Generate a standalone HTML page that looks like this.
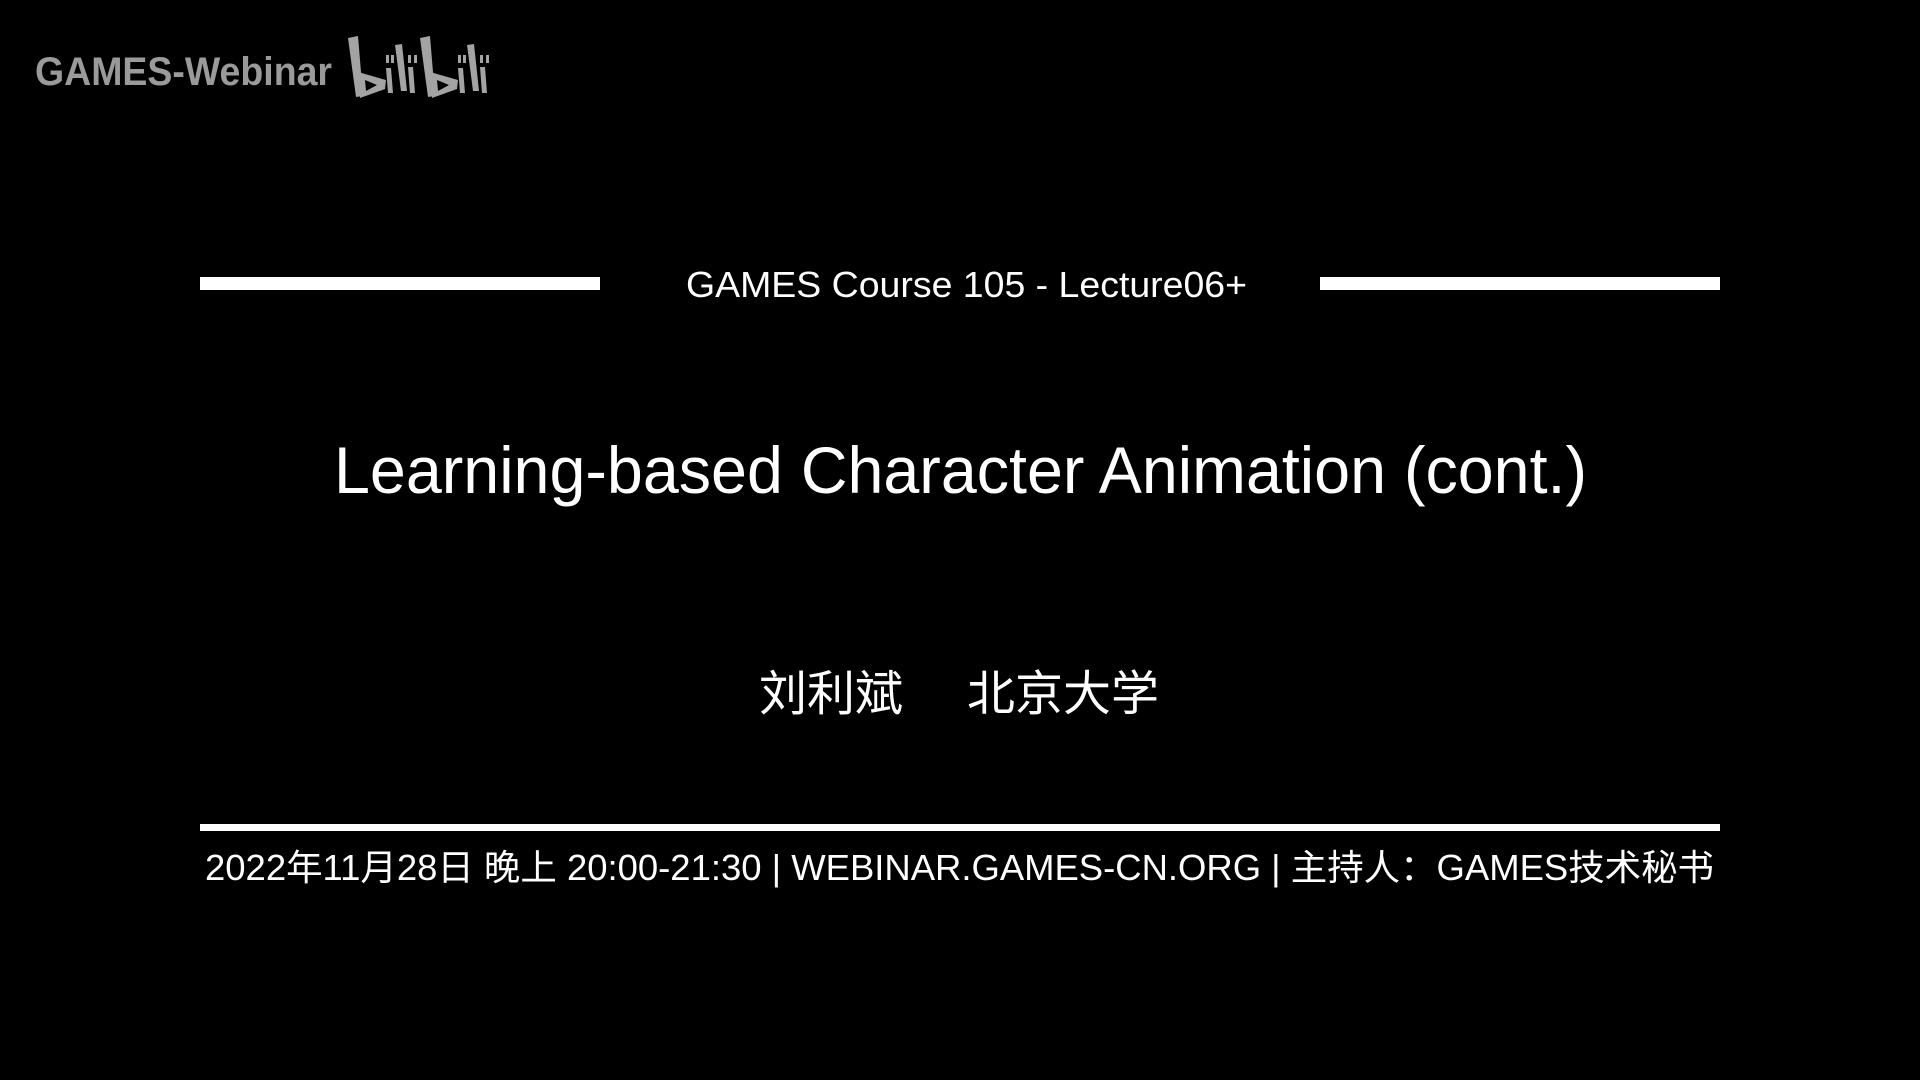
<!DOCTYPE html>
<html><head><meta charset="utf-8"><style>
html,body{margin:0;padding:0;background:#000;width:1920px;height:1080px;overflow:hidden}
svg{display:block}
</style></head><body>
<svg width="1920" height="1080" viewBox="0 0 1920 1080" xmlns="http://www.w3.org/2000/svg">
<rect width="1920" height="1080" fill="#000"/>
<text x="35" y="85" font-family="Liberation Sans, sans-serif" font-size="40" font-weight="bold" fill="#9a9a9a" textLength="297" lengthAdjust="spacingAndGlyphs">GAMES-Webinar</text>
<g fill="#a3a3a3">
 <g id="bl">
  <polygon points="348,38 358,36 363,96 356,97"/>
  <polygon points="358,72 386,80 385,89 360,98"/>
  <polygon points="365,80 377,85 366,91" fill="#000"/>
  <rect x="386" y="55" width="3" height="8"/><rect x="391" y="55" width="3" height="8"/>
  <polygon points="386,68 391,68 393,93 388,93"/>
  <polygon points="395,45 402,44 407,91 401,91"/>
  <rect x="408" y="55" width="3" height="8"/><rect x="414" y="55" width="3" height="8"/>
  <polygon points="408,67 413,67 415,93 410,93"/>
 </g>
 <use href="#bl" x="72"/>
</g>
<rect x="200" y="277" width="400" height="13" fill="#fff"/>
<rect x="1320" y="277" width="400" height="13" fill="#fff"/>
<text x="686" y="297" font-family="Liberation Sans, sans-serif" font-size="36" fill="#fff" textLength="561" lengthAdjust="spacingAndGlyphs">GAMES Course 105 - Lecture06+</text>
<text x="334" y="493" font-family="Liberation Sans, sans-serif" font-size="66" fill="#fff" textLength="1253" lengthAdjust="spacingAndGlyphs">Learning-based Character Animation (cont.)</text>
<text x="759" y="710" font-family="Liberation Sans, Noto Sans CJK SC, sans-serif" font-size="48" fill="#fff">刘利斌</text>
<text x="967" y="710" font-family="Liberation Sans, Noto Sans CJK SC, sans-serif" font-size="48" fill="#fff">北京大学</text>
<rect x="200" y="824" width="1520" height="7" fill="#fff"/>
<text x="205" y="880" font-family="Liberation Sans, Noto Sans CJK SC, sans-serif" font-size="36" fill="#fff" textLength="1509" lengthAdjust="spacingAndGlyphs">2022年11月28日 晚上 20:00-21:30 | WEBINAR.GAMES-CN.ORG | 主持人：GAMES技术秘书</text>
</svg>
</body></html>
